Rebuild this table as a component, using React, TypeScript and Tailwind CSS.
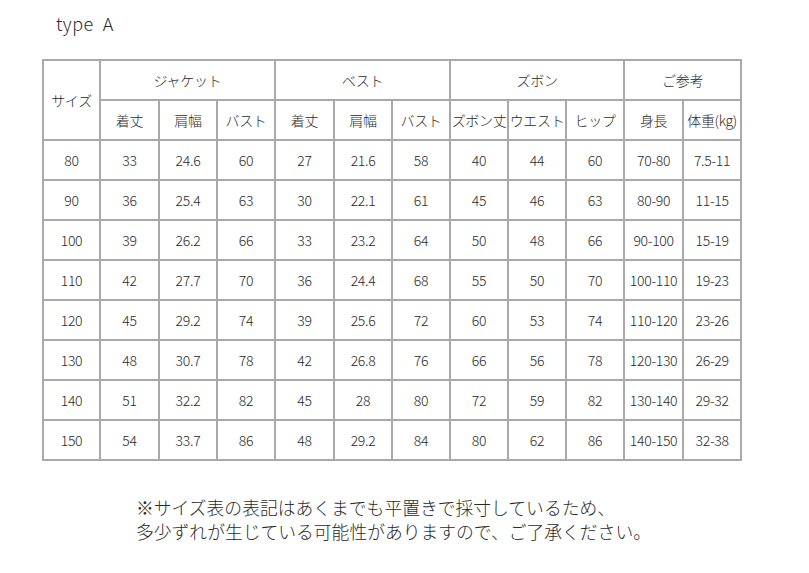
import React from 'react'

const font = { fontFamily: '"Noto Sans CJK JP", "Noto Sans", sans-serif' }

const rows: string[][] = [
  ['80', '33', '24.6', '60', '27', '21.6', '58', '40', '44', '60', '70-80', '7.5-11'],
  ['90', '36', '25.4', '63', '30', '22.1', '61', '45', '46', '63', '80-90', '11-15'],
  ['100', '39', '26.2', '66', '33', '23.2', '64', '50', '48', '66', '90-100', '15-19'],
  ['110', '42', '27.7', '70', '36', '24.4', '68', '55', '50', '70', '100-110', '19-23'],
  ['120', '45', '29.2', '74', '39', '25.6', '72', '60', '53', '74', '110-120', '23-26'],
  ['130', '48', '30.7', '78', '42', '26.8', '76', '66', '56', '78', '120-130', '26-29'],
  ['140', '51', '32.2', '82', '45', '28', '80', '72', '59', '82', '130-140', '29-32'],
  ['150', '54', '33.7', '86', '48', '29.2', '84', '80', '62', '86', '140-150', '32-38'],
]

const subHeads = ['着丈', '肩幅', 'バスト', '着丈', '肩幅', 'バスト', 'ズボン丈', 'ウエスト', 'ヒップ', '身長', '体重(kg)']
const colWidths = ['w-[57px]', 'w-[59px]', 'w-[58px]', 'w-[58px]', 'w-[59px]', 'w-[58px]', 'w-[58px]', 'w-[58px]', 'w-[58px]', 'w-[58px]', 'w-[59px]', 'w-[58px]']

const cell = 'border-2 border-[#a9a9a9] text-center align-middle h-[40px] p-0 whitespace-nowrap'

export default function App() {
  return (
    <div className="w-[809px] h-[573px] bg-white text-[#2a2a2a] font-light" style={font}>
      {/* title */}
      <div className="h-[59px] pl-[56px] pt-[9px] text-[18px] leading-[28px] tracking-[0.5px]">type&nbsp; A</div>

      {/* size table */}
      <table className="ml-[42px] w-[698px] table-fixed border-collapse text-[14px] tracking-[-0.3px]">
        <colgroup>
          {colWidths.map((w, i) => (
            <col key={i} className={w} />
          ))}
        </colgroup>
        <thead>
          <tr>
            <th rowSpan={2} className={`${cell} font-light`}>サイズ</th>
            <th colSpan={3} className={`${cell} font-light`}>ジャケット</th>
            <th colSpan={3} className={`${cell} font-light`}>ベスト</th>
            <th colSpan={3} className={`${cell} font-light`}>ズボン</th>
            <th colSpan={2} className={`${cell} font-light`}>ご参考</th>
          </tr>
          <tr>
            {subHeads.map((h, i) => (
              <th key={i} className={`${cell} font-light`}>{h}</th>
            ))}
          </tr>
        </thead>
        <tbody>
          {rows.map((r, i) => (
            <tr key={i}>
              {r.map((v, j) => (
                <td key={j} className={cell}>{v}</td>
              ))}
            </tr>
          ))}
        </tbody>
      </table>

      {/* note */}
      <div className="mt-[34px] pl-[136px] text-[17.8px] leading-[24px]">
        <p>※サイズ表の表記はあくまでも平置きで採寸しているため、</p>
        <p>多少ずれが生じている可能性がありますので、ご了承ください。</p>
      </div>
    </div>
  )
}
